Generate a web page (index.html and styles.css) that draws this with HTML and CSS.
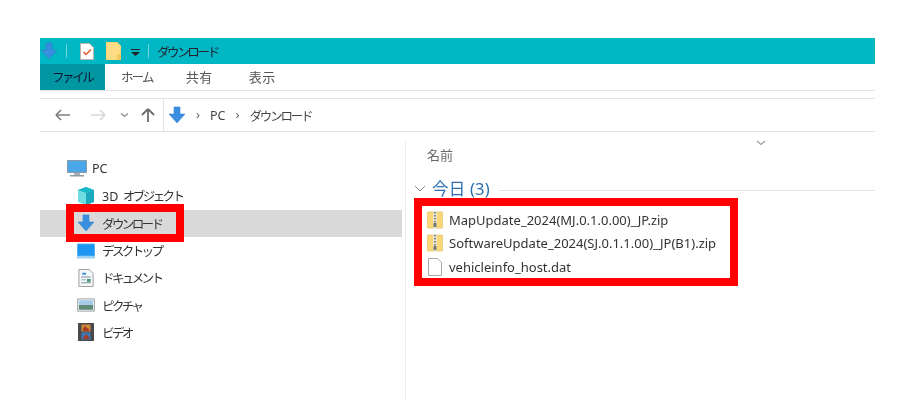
FILE: index.html
```html
<!DOCTYPE html>
<html lang="ja">
<head>
<meta charset="utf-8">
<title>ダウンロード</title>
<link rel="stylesheet" href="styles.css">
</head>
<body>
<svg class="defs" width="0" height="0" aria-hidden="true">
  <defs>
    <symbol id="down" viewBox="0 0 18 18">
      <path d="M6 1h6v7h5l-8 9-8-9h5z" fill="#3a8ee0" stroke="#2a78c8" stroke-width=".5"/>
    </symbol>
    <symbol id="zip" viewBox="0 0 16 18">
      <path d="M.5 1h15v16H.5z" fill="#f8d878" stroke="#e4b850" stroke-width=".6"/>
      <path d="M6 0h4v18H6z" fill="#e8e4d0"/>
      <path d="M7 1h2v1.500H7zM7 4h2v1.500H7zM7 7h2v1.500H7zM7 10h2v1.500H7z" fill="#8a8a80"/>
      <path d="M6.500 12h3v4h-3z" fill="#77776e"/>
    </symbol>
  </defs>
</svg>
<main class="window">
  <header class="titlebar">
    <svg class="t-down"><use href="#down"/></svg>
    <span class="sep"></span>
    <svg class="t-note" viewBox="0 0 14 17">
      <path d="M.5.500h9l4 4v12H.5z" fill="#fff" stroke="#b9b3ad"/>
      <path d="M3.500 9l2.500 2.500 5-5" fill="none" stroke="#e8562a" stroke-width="1.500"/>
    </svg>
    <svg class="t-folder" viewBox="0 0 15 18">
      <path d="M0 0h11l4 4v14H0z" fill="#fcdc84" stroke="#f0c860" stroke-width=".6"/>
      <path d="M11 12h4v6h-4z" fill="#f4c95c"/>
    </svg>
    <svg class="t-menu" viewBox="0 0 9 7">
      <path d="M0 0h9v1H0z" fill="#222"/><path d="M0 3h9L4.500 7z" fill="#222"/>
    </svg>
    <span class="sep"></span>
    <span class="t-title">ダウンロード</span>
  </header>
  <nav class="tabs">
    <span class="tab tab-file">ファイル</span>
    <span class="tab tab-home">ホーム</span>
    <span class="tab tab-share">共有</span>
    <span class="tab tab-view">表示</span>
  </nav>
  <section class="addrrow">
    <svg class="nav-icons" viewBox="0 0 100 16">
      <path d="M1 8h14M1 8l5-5M1 8l5 5" fill="none" stroke="#7c7c7c" stroke-width="1.600"/>
      <path d="M50 8H36M50 8l-5-5M50 8l-5 5" fill="none" stroke="#d8d8d8" stroke-width="1.600"/>
      <path d="M66 6.500l3.500 3 3.500-3" fill="none" stroke="#8a8a8a" stroke-width="1.300"/>
      <path d="M93 15V2M93 2l-6 6M93 2l6 6" fill="none" stroke="#6c6c6c" stroke-width="1.800"/>
    </svg>
    <div class="addrbox">
      <svg class="a-down"><use href="#down"/></svg>
      <span class="crumb-sep">›</span>
      <span class="crumb crumb-pc">PC</span>
      <span class="crumb-sep">›</span>
      <span class="crumb">ダウンロード</span>
    </div>
  </section>
  <div class="panes">
    <aside class="tree">
      <div class="row row-pc">
        <svg class="ic" viewBox="0 0 20 17">
          <path d="M.5.500h19v12H.5z" fill="#4aa8e8" stroke="#8a9aa8"/>
          <path d="M7 13h6v2H7z" fill="#a8b0b8"/><path d="M3 15h14v1.500H3z" fill="#8f9aa4"/>
        </svg>
        <span>PC</span>
      </div>
      <div class="row">
        <svg class="ic" viewBox="0 0 18 18">
          <path d="M9 0l8 3v12l-8 3-8-3V3z" fill="#6fdde2"/>
          <path d="M9 6l8-3v12l-8 3z" fill="#1aa8bc"/>
          <path d="M1 3l8 3 8-3-8-3z" fill="#17b8c8"/>
        </svg>
        <span><span class="latin">3D</span> オブジェクト</span>
      </div>
      <div class="row row-selected">
        <svg class="ic"><use href="#down"/></svg>
        <span>ダウンロード</span>
      </div>
      <div class="row">
        <svg class="ic" viewBox="0 0 18 15">
          <path d="M.5.500h17v12H.5z" fill="#1c96f0" stroke="#5cb4f0"/>
          <path d="M0 12.500h18V15H0z" fill="#9bd0f2"/>
        </svg>
        <span>デスクトップ</span>
      </div>
      <div class="row">
        <svg class="ic" viewBox="0 0 16 19">
          <path d="M.5.500h11l4 4v14H.5z" fill="#f4f6f8" stroke="#9a9a9a"/>
          <path d="M4 4h4v2H4z" fill="#3a8ee0"/>
          <path d="M3 8h10v1H3zM3 11h5v1H3zM3 14h10v1H3z" fill="#7a94a8"/>
          <path d="M9 10.500h4v3H9z" fill="#4a9a78"/>
        </svg>
        <span>ドキュメント</span>
      </div>
      <div class="row">
        <svg class="ic" viewBox="0 0 19 14">
          <path d="M.5.500h18v13H.5z" fill="#e8ecef" stroke="#a8a8a8"/>
          <path d="M2 2h15v5H2z" fill="#a8cce8"/>
          <path d="M2 7h15v5H2z" fill="#5f8a78"/>
        </svg>
        <span>ピクチャ</span>
      </div>
      <div class="row">
        <svg class="ic" viewBox="0 0 16 18">
          <path d="M0 0h16v18H0z" fill="#4a4a4a"/>
          <path d="M3.500 1.500h9v7h-9z" fill="#d08a3a"/>
          <path d="M3.500 9.500h9v7h-9z" fill="#3a7ab8"/>
          <path d="M5 6l2-3 2 2 2 1v2H5zM5 15l3-4 3 3v2H5z" fill="#a83a2a"/>
        </svg>
        <span>ビデオ</span>
      </div>
    </aside>
    <section class="files">
      <div class="colhead">
        <span class="col-name">名前</span>
        <svg class="col-chevron" viewBox="0 0 10 6"><path d="M1 1l4 3.500L9 1" fill="none" stroke="#a0a0a0" stroke-width="1.300"/></svg>
      </div>
      <div class="group">
        <svg class="group-chevron" viewBox="0 0 12 7"><path d="M1 1l5 5 5-5" fill="none" stroke="#8a8a8a"/></svg>
        <span class="group-label">今日 (3)</span>
        <span class="group-line"></span>
      </div>
      <ul class="filelist">
        <li class="file"><svg class="f-ic"><use href="#zip"/></svg><span>MapUpdate_2024(MJ.0.1.0.00)_JP.zip</span></li>
        <li class="file"><svg class="f-ic"><use href="#zip"/></svg><span>SoftwareUpdate_2024(SJ.0.1.1.00)_JP(B1).zip</span></li>
        <li class="file">
          <svg class="f-ic" viewBox="0 0 16 18"><path d="M1.500.500h9l4 4v13h-13z" fill="#fff" stroke="#a8a8a8"/></svg>
          <span>vehicleinfo_host.dat</span>
        </li>
      </ul>
    </section>
  </div>
</main>
<div class="mark mark-nav"></div>
<div class="mark mark-files"></div>
</body>
</html>
```
FILE: styles.css
```css
* { box-sizing: border-box; }
html, body { margin: 0; padding: 0; background: #fff; }
body {
  width: 912px;
  height: 400px;
  overflow: hidden;
  position: relative;
  padding: 38px 37px 0 40px;
  font-family: "Noto Sans", "Noto Sans CJK JP", sans-serif;
  font-size: 12.500px;
  color: #3a3a3a;
}
.defs { position: absolute; }
.window { display: flex; flex-direction: column; height: 362px; filter: blur(.35px); }

.titlebar {
  height: 26px;
  flex: none;
  background: #00b7c3;
  display: flex;
  align-items: center;
  color: #223;
}
.t-down { width: 18px; height: 18px; }
.sep { width: 1px; height: 14px; background: #6fd4da; }
.t-down + .sep { margin-left: 8px; }
.t-note { width: 14px; height: 17px; margin-left: 13px; }
.t-folder { width: 15px; height: 18px; margin-left: 12px; }
.t-menu { width: 9px; height: 7px; margin-left: 10px; margin-top: 3px; }
.t-menu + .sep { margin-left: 8px; }
.t-title { margin-left: 8px; letter-spacing: -2.400px; font-size: 12.500px; }

.tabs {
  height: 27px;
  flex: none;
  display: flex;
  align-items: center;
  border-bottom: 1px solid #e2e2e2;
  color: #555;
  font-size: 13px;
}
.tab { padding-bottom: 2px; }
.tab-file {
  background: #0097a3;
  color: #113;
  width: 65px;
  height: 26px;
  padding-left: 12px;
  display: flex;
  align-items: center;
  font-size: 12.500px;
  letter-spacing: -2.400px;
}
.tab-home { padding-left: 16px; font-size: 12.500px; letter-spacing: -1.800px; }
.tab-share { padding-left: 33px; letter-spacing: .5px; }
.tab-view { padding-left: 36px; letter-spacing: .5px; }

.addrrow {
  flex: none;
  height: 34px;
  margin-top: 7px;
  display: flex;
  border-top: 1px solid #e4e4e4;
  border-bottom: 1px solid #e4e4e4;
}
.nav-icons { width: 100px; height: 16px; margin: 8px 0 0 15px; flex: none; }
.addrbox {
  margin-left: 8px;
  flex: 1;
  border-left: 1px solid #e4e4e4;
  display: flex;
  align-items: center;
  padding-left: 4px;
  gap: 10px;
  color: #444;
}
.a-down { width: 18px; height: 18px; }
.crumb-sep { color: #666; font-size: 13px; margin-top: -2px; }
.crumb { letter-spacing: -2.200px; }
.crumb-pc { letter-spacing: 0; }

.panes { flex: 1; display: flex; min-height: 0; padding-top: 9px; }
.tree {
  width: 366px;
  flex: none;
  border-right: 1px solid #ececec;
  padding-top: 14px;
}
.row {
  height: 27.300px;
  display: flex;
  align-items: center;
  padding-left: 37px;
  gap: 7px;
  letter-spacing: -2.600px;
  word-spacing: 4px;
  margin-right: 3px;
}
.row span { color: #333; }
.latin { letter-spacing: 0; }
.row-pc { padding-left: 27px; gap: 5px; letter-spacing: 0; }
.row-pc .ic { width: 20px; height: 17px; }
.row-selected { background: #d9d9d9; }
.ic { width: 18px; height: 18px; flex: none; }

.files { flex: 1; padding-left: 8px; }
.colhead {
  height: 36px;
  padding: 0 0 10px 13px;
  display: flex;
  align-items: center;
  color: #6a6a6a;
}
.col-name { font-size: 13px; }
.col-chevron { width: 10px; height: 6px; margin-left: 303px; margin-top: -23px; }
.group { display: flex; align-items: center; height: 22px; }
.group-chevron { width: 12px; height: 7px; flex: none; }
.group-label { color: #2d6fb0; font-size: 16.500px; margin-left: 6px; letter-spacing: .2px; }
.group-line { flex: 1; height: 1px; background: #e2e2e2; margin-left: 9px; margin-top: 5px; }

.filelist { list-style: none; margin: 9px 0 0; padding: 0; }
.file {
  height: 23.500px;
  display: flex;
  align-items: center;
  gap: 6px;
  padding-left: 13px;
  font-size: 13px;
  color: #333;
}
.f-ic { width: 16px; height: 18px; flex: none; }

.mark { position: absolute; border: 8px solid #f00; }
.mark-nav { left: 66px; top: 204px; width: 118px; height: 38px; }
.mark-files { left: 414px; top: 198px; width: 324px; height: 88px; }
```
